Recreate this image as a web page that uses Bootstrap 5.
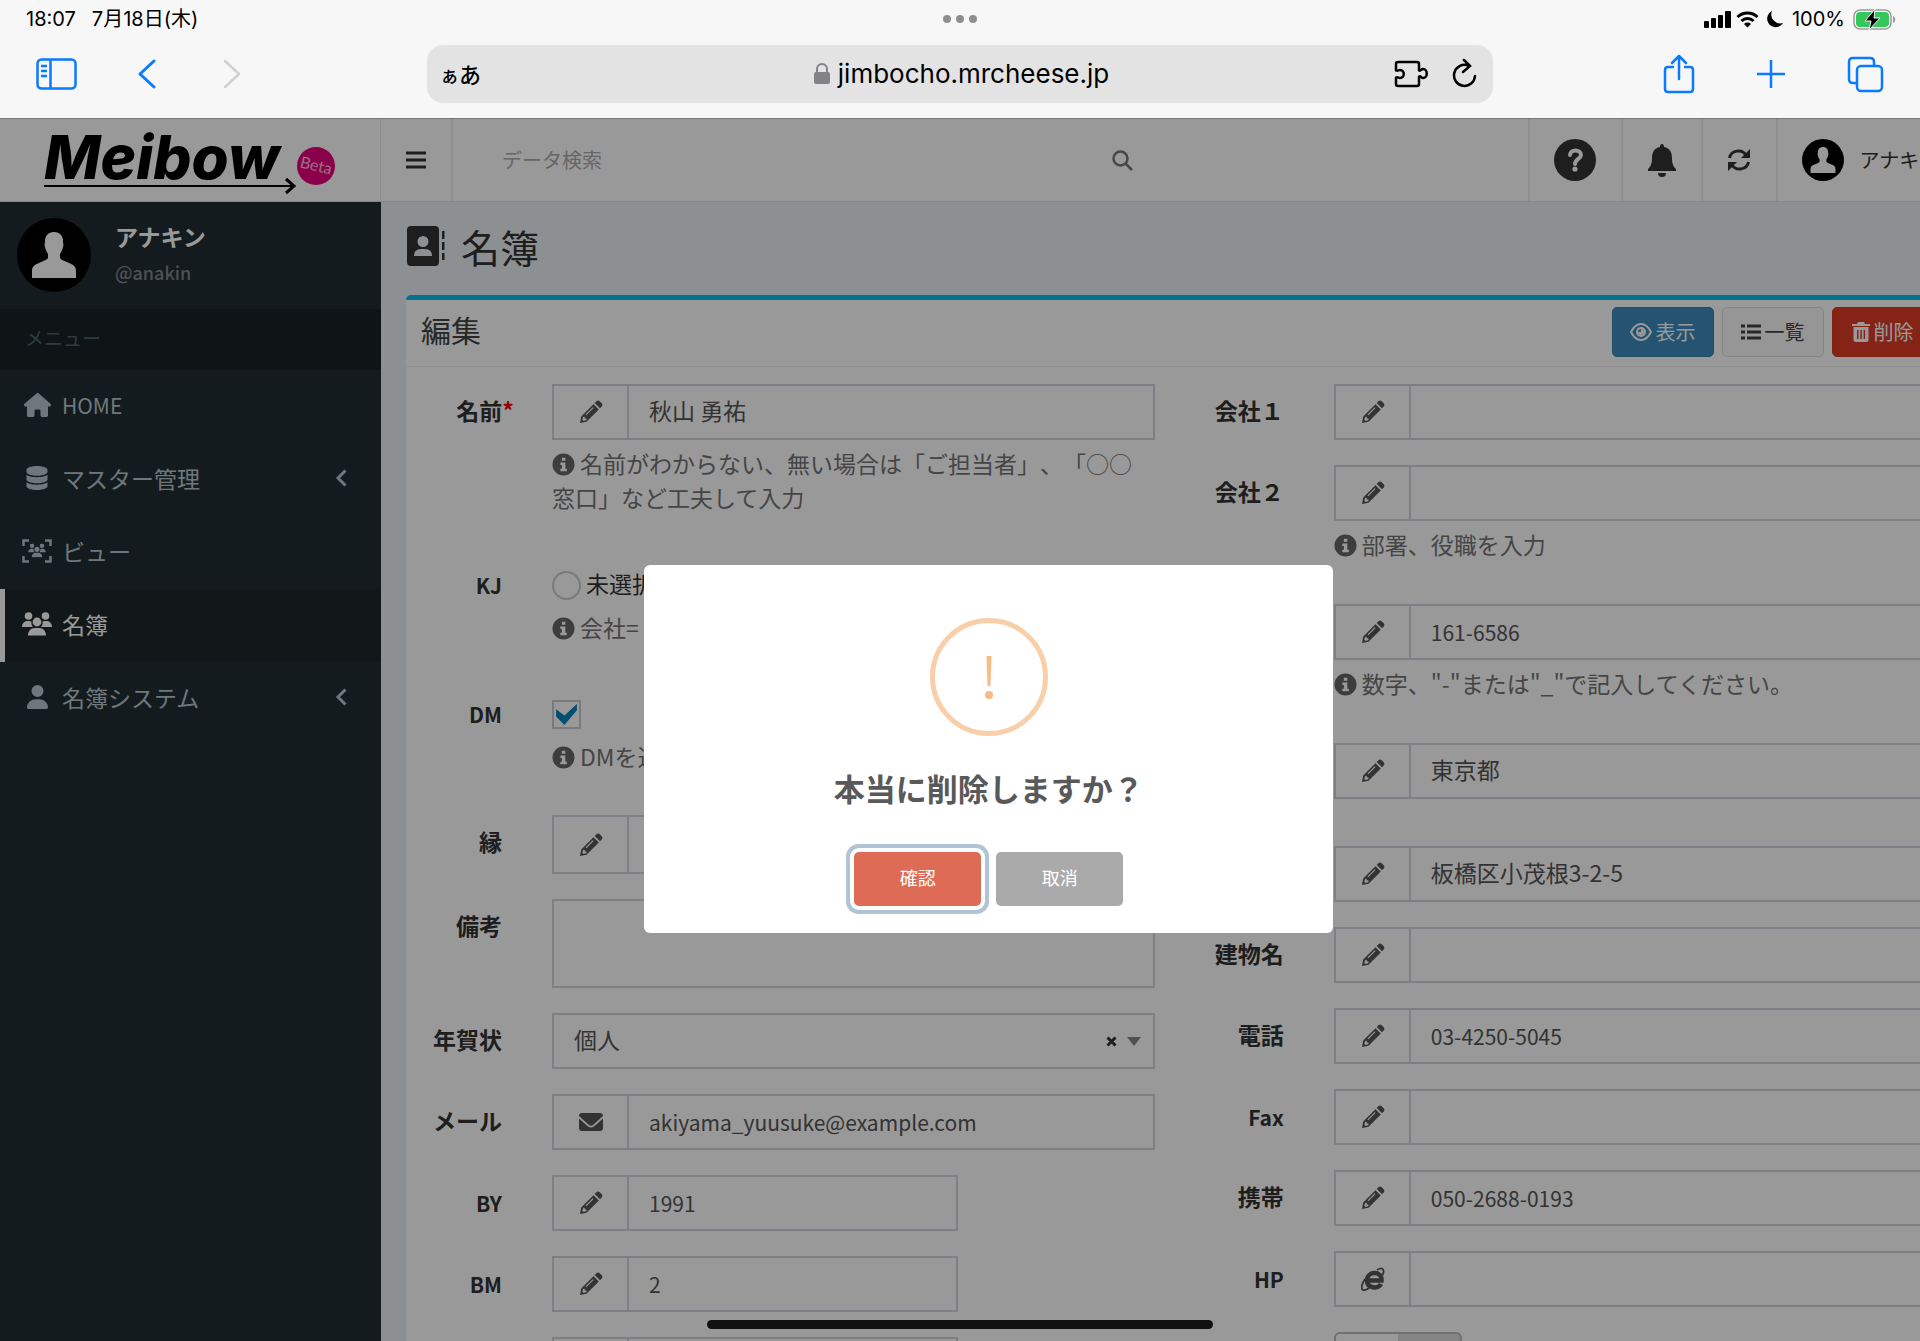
<!DOCTYPE html>
<html lang="ja">
<head>
<meta charset="utf-8">
<meta name="viewport" content="width=device-width, initial-scale=1">
<title>Meibow - 名簿 編集</title>
<link href="https://cdn.jsdelivr.net/npm/bootstrap@5.3.0/dist/css/bootstrap.min.css" rel="stylesheet">
<style>
body{font-family:"Noto Sans CJK JP","Noto Sans",sans-serif;font-size:23px;line-height:34px;color:#333;text-spacing-trim:space-all;background:#f7f7f7}
svg{display:block;flex:none;fill:currentColor}
.ln{fill:none;stroke:currentColor}
button.bare{border:0;background:none;padding:0;color:inherit;display:block}
/* browser chrome */
.chrome{height:119px;font-family:Inter,"Noto Sans CJK JP",sans-serif;color:#000;border-bottom:1px solid #777}
.statusbar{height:38px;padding:0 24px 0 26px;font-size:20px}
.tools{height:58px;margin-top:7px;padding:0 36px;color:#0a7aff}
.tools-side{width:391px}
.address{background:#e3e3e4;border-radius:16px;color:#000;padding:0 16px 0 13px;font-size:26px}
.address .kana{font-family:"Noto Sans CJK JP",sans-serif;font-weight:500;font-size:22px}
.address .kana small{font-size:19px}
.dots{top:15px}
.dots i{width:8px;height:8px;border-radius:50%;background:#8e8e90}
.homebar{bottom:12px;width:506px;height:9px;border-radius:5px;background:#111;z-index:20}
/* app */
.wide{width:103%}
.topbar{height:83px;background:#fff;border-bottom:1px solid #dde0e4;color:#333}
.brand{width:381px;border-right:1px solid #eee}
.cell{border-left:2px solid #eee}
.burger{width:72px}
.search{width:698px;padding:0 18px 0 47px;color:#777}
.search input{background:none;border:0;outline:0;font-size:20px;color:#555}
.search input::placeholder{color:#aaa;opacity:1}
.side{width:381px;background:#222d32;color:#b8c7ce}
.profile{height:107px;padding:16px 17px}
.profile b{color:#fff;line-height:36px}
.profile span{font-size:18px;line-height:36px;font-weight:500;color:#80878a}
.menuhead{height:61px;background:#1a2226;color:#4b646f;font-size:19px;padding:0 0 4px 25px}
.side a{height:73px;color:#b8c7ce;text-decoration:none;padding:0 34px 3px 17px;border-left:5px solid transparent}
.side a.active{background:#1e282c;color:#fff;border-color:#fff}
.side a .ic{width:30px;margin-right:10px}
.side .ic svg{margin:auto}
.content{background:#ecf0f5;padding:0 26px 0 25px}
.pagetitle{height:93px;font-size:39px;font-weight:400;line-height:48px;margin:0;padding-bottom:6px;gap:14px}
.panel{background:#fff;border-top:5px solid #00c0ef;border-radius:5px}
.panelhead{height:67px;border-bottom:1px solid #f0f0f0;padding:0 18px 2px 15px}
.panelhead h2{font-size:30px;font-weight:400;margin:0;padding-bottom:7px;color:#444}
.panelhead .btn{height:50px;width:102px;font-size:20px;line-height:30px;padding:0;border-width:1px;border-radius:5px}
.b-show{background:#3c8dbc;border-color:#367fa9;color:#fff}
.b-list{background:#fbfbfb;border-color:#ddd;color:#444}
.b-del{background:#dd3b26;border-color:#d73925;color:#fff}
.fields{margin:0 -9px;padding-top:17px}
.fields>.col-6{padding:0 24px 0 0}
.fg{margin-bottom:25px}
.fg>.lb{width:155px;padding:9px 50px 0 0;text-align:right;font-weight:700;flex:none;white-space:nowrap}
.lb em{color:#f00;font-style:normal;margin-right:-12px}
.fg>.lb.latin{font-size:21px;padding-top:11px}
.fg .input-group-text{width:76px;border:2px solid #d2d6de;border-right-width:0;border-radius:0;background:#fff;justify-content:center;color:#555}
.fg .form-control,.fg .form-select{height:56px;border:2px solid #d2d6de;border-radius:0;font-size:23px;line-height:34px;color:#555;padding:4px 20px 8px}
.fg .form-control.latin{font-size:21px;padding:6px 20px}
.fg .form-select{background-image:none}
.fg textarea.form-control{height:89px;resize:none}
.short{width:406px}
.tall .form-control{height:59px}
.roomy{margin-bottom:47px}
.hint{color:#737373;padding-top:6px;margin-bottom:18px}
.hint svg{display:inline-block;vertical-align:-3px;margin-right:5px;color:#666}
.choice{height:53px;padding-bottom:2px}
.choice+.hint{padding-top:0;margin-bottom:17px}
.choice .form-check-input{width:29px;height:29px;margin:6px 5px 0 0;border:2px solid #ccc;background-color:#fff}
.choice .form-check-input[type=checkbox]{border-radius:0}
.choice .form-check-input:checked{background-size:25px;background-image:url("data:image/svg+xml,%3Csvg xmlns='http://www.w3.org/2000/svg' viewBox='0 0 24 24'%3E%3Cpath d='M2 7 10 13 22 2v6L10 22 2 14z' fill='%230082be'/%3E%3C/svg%3E")}
.selmark{right:14px;top:0;height:56px;color:#333;gap:10px;pointer-events:none}
.toggle{width:128px;height:48px;border:2px solid #bbb;border-radius:6px;background:linear-gradient(90deg,#fff 50%,#ddd 50%)}
/* dialog */
.veil{inset:0 auto 0 0;background:rgba(0,0,0,.4);z-index:10}
.ask{width:689px;height:368px;margin-top:446px;background:#fff;border-radius:6px;color:#595959;padding-top:53px}
.ask h3{font-size:31px;line-height:40px;font-weight:700;margin:32px 0 44px}
.ask .btn{width:127px;height:54px;border:0;border-radius:5px;font-size:18px;color:#fff;padding:0 0 4px}
.b-yes{background:#dd6b55;box-shadow:0 0 0 4px #fff,0 0 0 8px #b0c4d3}
.b-no{background:#aaa}
</style>
<script src="https://cdn.jsdelivr.net/npm/bootstrap@5.3.0/dist/js/bootstrap.bundle.min.js"></script>
</head>
<body class="vh-100 overflow-hidden d-flex flex-column">
<svg width="0" height="0" class="position-absolute" aria-hidden="true"><defs>
<symbol id="pencil" viewBox="0 0 24 24"><path fill-rule="evenodd" d="M1 23l1.200-6.500L14.500 4.200l5.300 5.300L7.500 21.800zM4.300 16.700l-1 3 1.400 1.300 2.900-1-.3-1.500-1.400-.3-.3-1.400zM13.700 7.200L6.500 14.400l.8.8L14.500 8zM15.700 3l1.700-1.700c1-1 2.400-.9 3.300 0l2 2c.9.900.9 2.300 0 3.200L21 8.300z"/></symbol>
<symbol id="info" viewBox="0 0 24 24"><path fill-rule="evenodd" d="M12 .5a11.500 11.500 0 1 0 0 23 11.500 11.500 0 0 0 0-23zM10.300 5h3.600v3.200h-3.600zM8.700 10h5.200v6.500h1.600V19H8.700v-2.500h1.600v-4H8.700z"/></symbol>
<symbol id="head" viewBox="0 0 74 74"><circle cx="37" cy="37" r="37" fill="#000"/><path fill="#fff" d="M37 14c6 0 9 4 9 9 0 3 1 3 0 6-1 4-2 5-3 7v4c1 2 5 3 9 5 5 2 7 4 7 8v7H15v-7c0-4 2-6 7-8 4-2 8-3 9-5v-4c-1-2-2-3-3-7-1-3 0-3 0-6 0-5 3-9 9-9z"/></symbol>
<symbol id="users" viewBox="0 0 30 24"><circle cx="6.500" cy="4" r="3.800"/><circle cx="23.500" cy="4" r="3.800"/><circle cx="15" cy="10" r="4.400"/><path d="M0 15c0-3.500 2.500-6 5-6h2c1 0 2 .3 2.500.8-.4 2 .3 4 1.500 5.200zM30 15c0-3.500-2.500-6-5-6h-2c-1 0-2 .3-2.500.8.400 2-.3 4-1.500 5.200zM6 23.500C6 19 9 16 12.500 16h5c3.500 0 6.500 3 6.500 7.500z"/></symbol>
</defs></svg>

<header class="chrome position-relative flex-shrink-0">
  <div class="statusbar d-flex align-items-center justify-content-between">
    <div class="d-flex gap-3"><span>18:07</span><span>7月18日(木)</span></div>
    <div class="d-flex align-items-center">
      <svg width="28" height="17" class="me-1"><rect y="10" width="5" height="7" rx="1"/><rect x="7" y="7" width="5" height="10" rx="1"/><rect x="14" y="4" width="5" height="13" rx="1"/><rect x="21" width="6" height="17" rx="1"/></svg>
      <svg width="23" height="17" class="me-2"><path class="ln" stroke-width="3" d="M1.500 6a14.500 14.500 0 0 1 20 0M5.500 10a8.500 8.500 0 0 1 12 0"/><path d="M11.500 16.500L8 13a5 5 0 0 1 7 0z"/></svg>
      <svg width="17" height="17" class="me-2"><path d="M5 0a9 9 0 0 0 11 12A8.500 8.500 0 1 1 5 0z"/></svg>
      <span class="me-2">100%</span>
      <svg width="43" height="21"><rect x="1" y="1" width="37" height="19" rx="6" fill="#fff" stroke="#999" stroke-width="1.500"/><rect x="3" y="3" width="33" height="15" rx="4" fill="#34c759"/><path d="M40 7c3 1 3 6 0 7z" fill="#999"/><path d="M22 0L12 12h6l-2 9 11-12h-6z" stroke="#f7f7f7"/></svg>
    </div>
  </div>
  <div class="dots position-absolute start-50 translate-middle-x d-flex" style="gap:5px"><i></i><i></i><i></i></div>
  <div class="tools d-flex">
    <div class="tools-side d-flex align-items-center">
      <button class="bare" aria-label="サイドバー"><svg width="41" height="32" class="ln" stroke-width="2.500"><rect x="1.500" y="1.500" width="38" height="29" rx="4"/><path d="M14.500 1v30M5 8h6M5 13h6M5 18h6"/></svg></button>
      <button class="bare" aria-label="戻る" style="margin-left:61px"><svg width="18" height="30" class="ln" stroke-width="3" stroke-linecap="round" stroke-linejoin="round"><path d="M16 2L2 15l14 13"/></svg></button>
      <button class="bare" aria-label="進む" style="margin-left:67px;color:#d0d0d1"><svg width="18" height="30" class="ln" stroke-width="2.500" stroke-linecap="round" stroke-linejoin="round"><path d="M2 2l14 13L2 28"/></svg></button>
    </div>
    <div class="address flex-fill d-flex align-items-center justify-content-between">
      <span class="kana"><small>ぁ</small>あ</span>
      <div class="d-flex align-items-center ps-5"><svg width="16" height="22" class="me-2" style="color:#828287"><rect y="9" width="16" height="12" rx="2"/><path class="ln" stroke-width="2" d="M3 10V6a5 5 0 0 1 10 0v4"/></svg><span>jimbocho.mrcheese.jp</span></div>
      <div class="d-flex align-items-center gap-4">
        <svg width="34" height="28" class="ln" stroke-width="2.500"><path stroke-linejoin="round" d="M4 2h19q2 0 2 2v6.500c2 1 2-1.500 4-1.500 5 0 5 9 0 9-2 0-2-2.500-4-1.500V24q0 2-2 2H4q-2 0-2-2v-6.500c2-1 2 .5 4 .5 5 0 5-8 0-8-2 0-2 1.500-4 .5V4q0-2 2-2z"/></svg>
        <svg width="25" height="32" class="ln" stroke-width="2.500" stroke-linecap="round"><path d="M16 7.500A10.500 10.500 0 1 0 23 18M12 2l6 6-7 6"/></svg>
      </div>
    </div>
    <div class="tools-side d-flex align-items-center justify-content-end" style="gap:62px">
      <button class="bare" aria-label="共有"><svg width="32" height="40" class="ln" stroke-width="2.500" stroke-linecap="round" stroke-linejoin="round"><path d="M10 13H5q-3 0-3 3v19q0 3 3 3h22q3 0 3-3V16q0-3-3-3h-5M16 25V2M9 9l7-7 7 7"/></svg></button>
      <button class="bare" aria-label="新規タブ"><svg width="28" height="28" class="ln" stroke-width="2.500"><path d="M14 0v28M0 14h28"/></svg></button>
      <button class="bare" aria-label="タブ一覧"><svg width="37" height="37" class="ln" stroke-width="2.500"><rect x="10" y="10" width="25" height="25" rx="4"/><path d="M10 27H6q-4 0-4-4V6q0-4 4-4h17q4 0 4 4v4"/></svg></button>
    </div>
  </div>
</header>

<div class="flex-fill position-relative overflow-hidden d-flex flex-column">
  <nav class="topbar wide d-flex flex-shrink-0" aria-label="上部">
    <a class="brand" href="#" aria-label="Meibow Beta"><svg width="380" height="81"><text x="44" y="60" font-family="Inter,sans-serif" font-weight="800" font-style="italic" font-size="60" fill="#000">Meibow</text><path class="ln" stroke-width="2" d="M44 67h248" style="color:#000"/><path class="ln" stroke-width="3" style="color:#000" d="M286 60l8 7-8 7"/><circle cx="316" cy="47" r="19" fill="#e6007e"/><text transform="rotate(13 316 47)" x="316" y="52" text-anchor="middle" font-family="Lato,sans-serif" font-size="16" fill="#fbd">Beta</text></svg></a>
    <button class="bare burger d-flex align-items-center justify-content-center" style="border-right:2px solid #eee" aria-label="メニュー切替"><svg width="20" height="18"><path class="ln" stroke-width="3" d="M0 2h20M0 9h20M0 16h20"/></svg></button>
    <form class="search d-flex align-items-center"><input class="flex-fill" type="search" placeholder="データ検索" aria-label="データ検索"><button type="button" class="bare" aria-label="検索"><svg width="21" height="21" class="ln" stroke-width="2.500"><circle cx="8.500" cy="8.500" r="7"/><path d="M13.500 13.500l6.500 6.500"/></svg></button></form>
    <div class="ms-auto d-flex">
      <a href="#" class="cell text-reset d-flex align-items-center justify-content-center" style="width:93px" aria-label="ヘルプ"><svg width="42" height="42"><circle cx="21" cy="21" r="21"/><path class="ln" style="color:#fff" stroke-width="4" stroke-linecap="round" d="M16 16c0-6 11-6 11 0 0 4-6 4-6 9"/><circle cx="21" cy="30" r="2.600" fill="#fff"/></svg></a>
      <a href="#" class="cell text-reset d-flex align-items-center justify-content-center" style="width:80px" aria-label="通知"><svg width="30" height="33"><path d="M15 0q2 0 2 3c6 1 8 6 8 11 0 7 2 9 4 11v2H1v-2c2-2 4-4 4-11 0-5 2-10 8-11q0-3 2-3zM11 29h8a4 4 0 0 1-8 0z"/></svg></a>
      <a href="#" class="cell text-reset d-flex align-items-center justify-content-center" style="width:75px" aria-label="更新"><svg width="24" height="22"><path class="ln" stroke-width="3" d="M2.500 9A9 8.500 0 0 1 19 6M21.500 13A9 8.500 0 0 1 5 16"/><path d="M23 0v9h-9zM1 22v-9h9z"/></svg></a>
      <a href="#" class="cell text-reset text-decoration-none d-flex align-items-center text-nowrap" style="width:202px;padding-left:24px;font-size:20px"><svg width="42" height="42" class="me-3"><use href="#head"/></svg>アナキン</a>
    </div>
  </nav>
  <div class="wide flex-fill d-flex">
    <aside class="side flex-shrink-0">
      <div class="profile d-flex"><svg width="74" height="74"><use href="#head"/></svg><div class="d-flex flex-column ps-4"><b>アナキン</b><span>@anakin</span></div></div>
      <div class="menuhead d-flex align-items-center">メニュー</div>
      <nav aria-label="メニュー">
        <a href="#" class="d-flex align-items-center"><span class="ic"><svg width="27" height="24" viewBox="0 0 576 512"><path d="M575.800 255.500c0 18-15 32.100-32 32.100h-32l.7 160.200V472c0 22.100-17.900 40-40 40H392c-22.100 0-40-17.900-40-40v-88c0-17.700-14.300-32-32-32h-64c-17.700 0-32 14.300-32 32v88c0 22.100-17.900 40-40 40h-80c-22.100 0-40-17.900-40-40V287.600H32c-18 0-32-14-32-32.100 0-9 3-17 10-24L266.400 8c7-7 15-8 22-8s15 2 21 7l255.400 224.500c8 7 12 15 11 24z"/></svg></span><span style="font-size:21px">HOME</span></a>
        <a href="#" class="d-flex align-items-center"><span class="ic"><svg width="22" height="24" viewBox="0 0 448 512"><path d="M448 80v48c0 44.200-100.300 80-224 80S0 172.200 0 128V80C0 35.800 100.300 0 224 0s224 35.800 224 80zM393.200 214.700c20.800-7.400 39.900-16.900 54.800-28.600V288c0 44.200-100.300 80-224 80S0 332.200 0 288V186.100c14.900 11.800 34 21.200 54.800 28.600C99.700 230.700 159.500 240 224 240s124.300-9.300 169.200-25.300zM0 346.100c14.900 11.800 34 21.200 54.800 28.600C99.700 390.700 159.500 400 224 400s124.300-9.300 169.200-25.300c20.800-7.400 39.900-16.900 54.800-28.600V432c0 44.200-100.300 80-224 80S0 476.200 0 432z"/></svg></span>マスター管理<svg class="ms-auto ln" width="12" height="18" stroke-width="3"><path d="M10.500 1.500L3 9l7.500 7.500"/></svg></a>
        <a href="#" class="d-flex align-items-center"><span class="ic"><svg width="30" height="24"><path class="ln" stroke-width="2.500" d="M1.500 7V1.500H7M23 1.500h5.500V7M28.500 17v5.500H23M7 22.500H1.500V17"/><use href="#users" x="5" y="4.500" width="20" height="14"/></svg></span>ビュー</a>
        <a href="#" class="active d-flex align-items-center" aria-current="page"><span class="ic"><svg width="30" height="24"><use href="#users"/></svg></span>名簿</a>
        <a href="#" class="d-flex align-items-center"><span class="ic"><svg width="21" height="24" viewBox="0 0 448 512"><path d="M224 256a128 128 0 1 0 0-256 128 128 0 1 0 0 256zm-45.700 48C79.800 304 0 383.800 0 482.300 0 498.700 13.300 512 29.700 512h388.600c16.400 0 29.700-13.300 29.700-29.700C448 383.800 368.200 304 269.700 304z"/></svg></span>名簿システム<svg class="ms-auto ln" width="12" height="18" stroke-width="3"><path d="M10.500 1.500L3 9l7.500 7.500"/></svg></a>
      </nav>
    </aside>
    <main class="content flex-fill">
      <h1 class="pagetitle d-flex align-items-center"><svg width="41" height="40"><path fill-rule="evenodd" d="M5 0h24q4 0 4 4v32q0 4-4 4H5q-4 0-4-4V4q0-4 4-4zM17 10a5.500 5.500 0 1 0 0 11 5.500 5.500 0 0 0 0-11zM15 23q-7 0-7 7h18q0-7-7-7z"/><path d="M36 5h2.500v8H36zM36 16h2.500v8H36zM36 27h2.500v7H36z"/></svg>名簿</h1>
      <section class="panel">
        <div class="panelhead d-flex align-items-center justify-content-between"><h2>編集</h2>
          <div class="d-flex gap-2">
            <button class="btn b-show d-flex align-items-center justify-content-center gap-1"><svg width="22" height="18"><path class="ln" stroke-width="2" d="M1 9q4-8 10-8t10 8q-4 8-10 8T1 9z"/><circle cx="11" cy="9" r="4" class="ln" stroke-width="2"/><path d="M11 9V6a3 3 0 1 1-3 3z"/></svg>表示</button>
            <button class="btn b-list d-flex align-items-center justify-content-center gap-1"><svg width="20" height="16"><path class="ln" stroke-width="3" d="M0 2h4M0 8h4M0 14h4M6 2h14M6 8h14M6 14h14"/></svg>一覧</button>
            <button class="btn b-del d-flex align-items-center justify-content-center gap-1"><svg width="18" height="20"><path fill-rule="evenodd" d="M0 2h5l1-2h6l1 2h5v2H0zM1.500 5h15v13q0 2-2 2h-11q-2 0-2-2zM5 8v9h1.500V8zM8.300 8v9h1.500V8zM11.600 8v9h1.500V8z"/></svg>削除</button>
          </div>
        </div>
        <form class="row fields">
          <div class="col-6">
            <div class="fg d-flex"><label class="lb" for="nm">名前<em>*</em></label><div class="flex-fill"><div class="input-group"><span class="input-group-text"><svg width="24" height="24"><use href="#pencil"/></svg></span><input id="nm" class="form-control" value="秋山 勇祐"></div><div class="hint"><svg width="23" height="23"><use href="#info"/></svg>名前がわからない、無い場合は「ご担当者」、「○○窓口」など工夫して入力</div></div></div>
            <div class="fg d-flex"><label class="lb latin" for="kj">KJ</label><div class="flex-fill"><div class="choice d-flex align-items-center"><input id="kj" type="radio" class="form-check-input"><label for="kj">未選択</label></div><div class="hint"><svg width="23" height="23"><use href="#info"/></svg>会社=</div></div></div>
            <div class="fg d-flex"><label class="lb latin" for="dm">DM</label><div class="flex-fill"><div class="choice d-flex align-items-center"><input id="dm" type="checkbox" class="form-check-input" checked></div><div class="hint"><svg width="23" height="23"><use href="#info"/></svg>DMを送</div></div></div>
            <div class="fg d-flex"><label class="lb" for="en">縁</label><div class="input-group tall"><span class="input-group-text"><svg width="24" height="24"><use href="#pencil"/></svg></span><input id="en" class="form-control"></div></div>
            <div class="fg d-flex"><label class="lb" for="memo">備考</label><textarea id="memo" class="form-control"></textarea></div>
            <div class="fg d-flex"><label class="lb" for="card">年賀状</label><div class="flex-fill position-relative"><select id="card" class="form-select"><option>個人</option></select><span class="selmark position-absolute d-flex align-items-center"><svg width="11" height="11" class="ln" stroke-width="3"><path d="M1.500 1.500l8 8M9.500 1.500l-8 8"/></svg><svg width="14" height="9" style="color:#888"><path d="M0 0h14L7 9z"/></svg></span></div></div>
            <div class="fg d-flex"><label class="lb" for="mail">メール</label><div class="input-group"><span class="input-group-text"><svg width="24" height="18"><path d="M3 0h18q3 0 3 3L14 12q-2 1.500-4 0L0 3q0-3 3-3zM0 5.500l9 8q3 2 6 0l9-8V15q0 3-3 3H3q-3 0-3-3z"/></svg></span><input id="mail" type="email" class="form-control latin" value="akiyama_yuusuke@example.com"></div></div>
            <div class="fg d-flex"><label class="lb latin" for="by">BY</label><div class="input-group short"><span class="input-group-text"><svg width="24" height="24"><use href="#pencil"/></svg></span><input id="by" class="form-control latin" value="1991"></div></div>
            <div class="fg d-flex"><label class="lb latin" for="bm">BM</label><div class="input-group short"><span class="input-group-text"><svg width="24" height="24"><use href="#pencil"/></svg></span><input id="bm" class="form-control latin" value="2"></div></div>
            <div class="fg d-flex"><label class="lb" for="bd"></label><div class="input-group short"><span class="input-group-text"></span><input id="bd" class="form-control" aria-label="誕生日"></div></div>
          </div>
          <div class="col-6">
            <div class="fg d-flex"><label class="lb" for="c1">会社１</label><div class="input-group"><span class="input-group-text"><svg width="24" height="24"><use href="#pencil"/></svg></span><input id="c1" class="form-control"></div></div>
            <div class="fg d-flex"><label class="lb" for="c2">会社２</label><div class="flex-fill"><div class="input-group"><span class="input-group-text"><svg width="24" height="24"><use href="#pencil"/></svg></span><input id="c2" class="form-control"></div><div class="hint"><svg width="23" height="23"><use href="#info"/></svg>部署、役職を入力</div></div></div>
            <div class="fg d-flex"><label class="lb" for="zip"></label><div class="flex-fill"><div class="input-group"><span class="input-group-text"><svg width="24" height="24"><use href="#pencil"/></svg></span><input id="zip" class="form-control latin" value="161-6586" aria-label="郵便番号"></div><div class="hint"><svg width="23" height="23"><use href="#info"/></svg>数字、"-"または"_"で記入してください。</div></div></div>
            <div class="fg roomy d-flex"><label class="lb" for="pref"></label><div class="input-group"><span class="input-group-text"><svg width="24" height="24"><use href="#pencil"/></svg></span><input id="pref" class="form-control" value="東京都" aria-label="都道府県"></div></div>
            <div class="fg d-flex"><label class="lb" for="addr"></label><div class="input-group"><span class="input-group-text"><svg width="24" height="24"><use href="#pencil"/></svg></span><input id="addr" class="form-control" value="板橋区小茂根3-2-5" aria-label="住所"></div></div>
            <div class="fg d-flex"><label class="lb" for="bld">建物名</label><div class="input-group"><span class="input-group-text"><svg width="24" height="24"><use href="#pencil"/></svg></span><input id="bld" class="form-control"></div></div>
            <div class="fg d-flex"><label class="lb" for="tel">電話</label><div class="input-group"><span class="input-group-text"><svg width="24" height="24"><use href="#pencil"/></svg></span><input id="tel" class="form-control latin" value="03-4250-5045"></div></div>
            <div class="fg d-flex"><label class="lb latin" for="fax">Fax</label><div class="input-group"><span class="input-group-text"><svg width="24" height="24"><use href="#pencil"/></svg></span><input id="fax" class="form-control"></div></div>
            <div class="fg d-flex"><label class="lb" for="mob">携帯</label><div class="input-group"><span class="input-group-text"><svg width="24" height="24"><use href="#pencil"/></svg></span><input id="mob" class="form-control latin" value="050-2688-0193"></div></div>
            <div class="fg d-flex"><label class="lb latin" for="hp">HP</label><div class="input-group"><span class="input-group-text"><svg width="24" height="24"><path class="ln" stroke-width="4.500" d="M6 13.500h14.500C21.500 3.500 6 3.500 6 13.500c0 8 11.500 9 14 3.500"/><path class="ln" stroke-width="1.800" d="M16 3c4-2.500 7-2 6.500 2-.1 1-.5 2-1 3M4 12C0 18 0 22 2 23c2 .6 4-.5 6-2"/></svg></span><input id="hp" class="form-control"></div></div>
            <div class="fg d-flex"><span class="lb"></span><button type="button" class="toggle" aria-label="切替"></button></div>
          </div>
        </form>
      </section>
    </main>
  </div>

  <div class="veil wide position-absolute d-flex justify-content-center align-items-start">
    <div class="ask text-center" role="dialog" aria-modal="true" aria-labelledby="askttl">
      <svg width="118" height="118" class="mx-auto"><circle cx="59" cy="59" r="56.500" fill="none" stroke="#facea8" stroke-width="5"/><path d="M56.500 38h5l-1 30h-3z" fill="#f8bb86"/><circle cx="59" cy="77" r="4" fill="#f8bb86"/></svg>
      <h3 id="askttl">本当に削除しますか？</h3>
      <div class="d-flex justify-content-center" style="gap:15px"><button class="btn b-yes">確認</button><button class="btn b-no">取消</button></div>
    </div>
  </div>
</div>
<div class="homebar position-absolute start-50 translate-middle-x"></div>
</body>
</html>
